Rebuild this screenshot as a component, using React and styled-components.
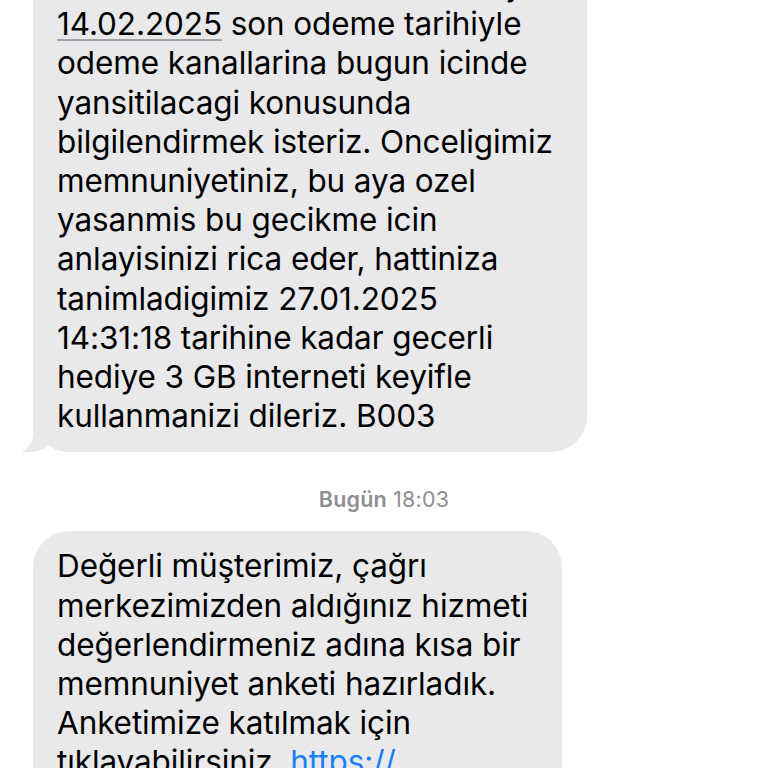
import React from "react";
import styled, { createGlobalStyle } from "styled-components";

const Global = createGlobalStyle`
  html, body { margin: 0; padding: 0; background: #ffffff; }
  body { font-family: Inter, "Noto Sans", "Liberation Sans", sans-serif; -webkit-font-smoothing: antialiased; }
  #root { width: 768px; height: 768px; overflow: hidden; }
`;

const Thread = styled.div`
  display: flex;
  flex-direction: column;
  margin-top: -35px;
  padding: 0 0 0 33px;
`;

const Bubble = styled.div`
  position: relative;
  align-self: flex-start;
  width: ${(p) => p.$width}px;
  box-sizing: border-box;
  background: #e9e9eb;
  border-radius: 36px;
  padding: ${(p) => p.$top}px 0 ${(p) => p.$bottom}px 24px;
  color: #000;
  font-size: 31.5px;
  line-height: 39.2px;
  letter-spacing: -0.1px;

  ${(p) =>
    p.$tail &&
    `
    &::before {
      content: "";
      position: absolute;
      bottom: 0;
      left: -10px;
      width: 34px;
      height: 40px;
      background: #e9e9eb;
      border-bottom-right-radius: 26px;
    }
    &::after {
      content: "";
      position: absolute;
      bottom: 0;
      left: -44px;
      width: 44px;
      height: 40px;
      background: #ffffff;
      border-bottom-right-radius: 17px;
    }
  `}
`;

const Line = styled.div`
  position: relative;
  z-index: 1;
  white-space: nowrap;
`;

const DateLink = styled.span`
  text-decoration: underline;
  text-decoration-color: #a2a2a6;
  text-decoration-thickness: 1.5px;
  text-underline-offset: 4px;
`;

const Url = styled.span`
  color: #1a7ff5;
`;

const Stamp = styled.div`
  align-self: center;
  margin: 35px 0 0 -33px;
  font-size: 21.5px;
  line-height: 25px;
  color: #8e8e93;
  letter-spacing: 0.2px;

  b {
    font-weight: 600;
  }
`;

const Gap = styled.div`
  height: ${(p) => p.$h}px;
`;

const first = [
  "faturanizin tutarinin ilk fatura ay",
  null,
  "odeme kanallarina bugun icinde",
  "yansitilacagi konusunda",
  "bilgilendirmek isteriz. Onceligimiz",
  "memnuniyetiniz, bu aya ozel",
  "yasanmis bu gecikme icin",
  "anlayisinizi rica eder, hattiniza",
  "tanimladigimiz 27.01.2025",
  "14:31:18 tarihine kadar gecerli",
  "hediye 3 GB interneti keyifle",
  "kullanmanizi dileriz. B003",
];

const second = [
  "Değerli müşterimiz, çağrı",
  "merkezimizden aldığınız hizmeti",
  "değerlendirmeniz adına kısa bir",
  "memnuniyet anketi hazırladık.",
  "Anketimize katılmak için",
];

export default function App() {
  return (
    <>
      <Global />
      <Thread>
        <Bubble $width={554} $top={0} $bottom={17} $tail>
          {first.map((t, i) =>
            t === null ? (
              <Line key={i}>
                <DateLink>14.02.2025</DateLink> son odeme tarihiyle
              </Line>
            ) : (
              <Line key={i}>{t}</Line>
            )
          )}
        </Bubble>
        <Stamp>
          <b>Bugün</b> 18:03
        </Stamp>
        <Gap $h={19} />
        <Bubble $width={529} $top={15} $bottom={20}>
          {second.map((t, i) => (
            <Line key={i}>{t}</Line>
          ))}
          <Line>
            tıklayabilirsiniz. <Url>https://</Url>
          </Line>
          <Line>anket.example.com</Line>
        </Bubble>
      </Thread>
    </>
  );
}
